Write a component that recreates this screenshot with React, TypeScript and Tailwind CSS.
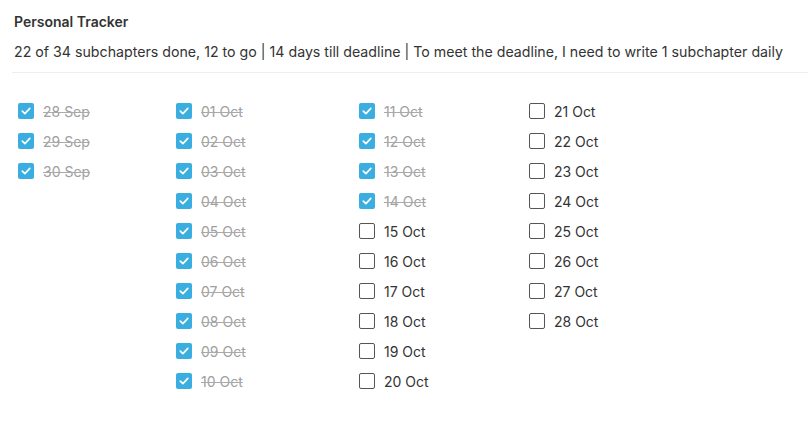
import React from "react";

type Item = { label: string; done: boolean };

const col1: Item[] = [
  { label: "28 Sep", done: true },
  { label: "29 Sep", done: true },
  { label: "30 Sep", done: true },
];
const col2: Item[] = ["01", "02", "03", "04", "05", "06", "07", "08", "09", "10"].map((d) => ({
  label: `${d} Oct`,
  done: true,
}));
const col3: Item[] = ["11", "12", "13", "14", "15", "16", "17", "18", "19", "20"].map((d) => ({
  label: `${d} Oct`,
  done: Number(d) <= 14,
}));
const col4: Item[] = ["21", "22", "23", "24", "25", "26", "27", "28"].map((d) => ({
  label: `${d} Oct`,
  done: false,
}));

function Check({ item }: { item: Item }) {
  return (
    <div className="flex h-[30px] items-center gap-[9px]">
      {item.done ? (
        <span className="flex h-4 w-4 items-center justify-center rounded-[2px] bg-[#3aaee0]">
          <svg width="12" height="12" viewBox="0 0 12 12" fill="none">
            <path d="M2.3 6.2 L4.9 8.7 L9.8 3.4" stroke="white" strokeWidth="1.7" strokeLinecap="round" strokeLinejoin="round" />
          </svg>
        </span>
      ) : (
        <span className="h-4 w-4 rounded-[2px] border-[1.5px] border-[#555] bg-white" />
      )}
      <span
        className={
          item.done
            ? "text-[14px] text-[#a0a0a0] line-through decoration-[#aaaaaa] decoration-1"
            : "text-[14px] text-[#333]"
        }
      >
        {item.label}
      </span>
    </div>
  );
}

function Column({ items, width }: { items: Item[]; width: string }) {
  return (
    <div className={`flex flex-col ${width}`}>
      {items.map((it) => (
        <Check key={it.label} item={it} />
      ))}
    </div>
  );
}

export default function App() {
  return (
    <div className="h-[422px] w-[808px] bg-white" style={{ fontFamily: "Inter, 'Noto Sans', sans-serif" }}>
      <div className="px-[14px] pt-[11px]">
        <div className="text-[14px] font-semibold text-[#333]">Personal Tracker</div>
        <div className="mt-[9px] text-[14.2px] text-[#333]">
          22 of 34 subchapters done, 12 to go | 14 days till deadline | To meet the deadline, I need to write 1 subchapter daily
        </div>
      </div>
      <div className="ml-[12px] mt-[10px] h-px bg-[#eeeeee]" />
      <div className="ml-[18px] mt-[23px] flex">
        <Column items={col1} width="w-[158px]" />
        <Column items={col2} width="w-[183px]" />
        <Column items={col3} width="w-[170px]" />
        <Column items={col4} width="w-[150px]" />
      </div>
    </div>
  );
}
